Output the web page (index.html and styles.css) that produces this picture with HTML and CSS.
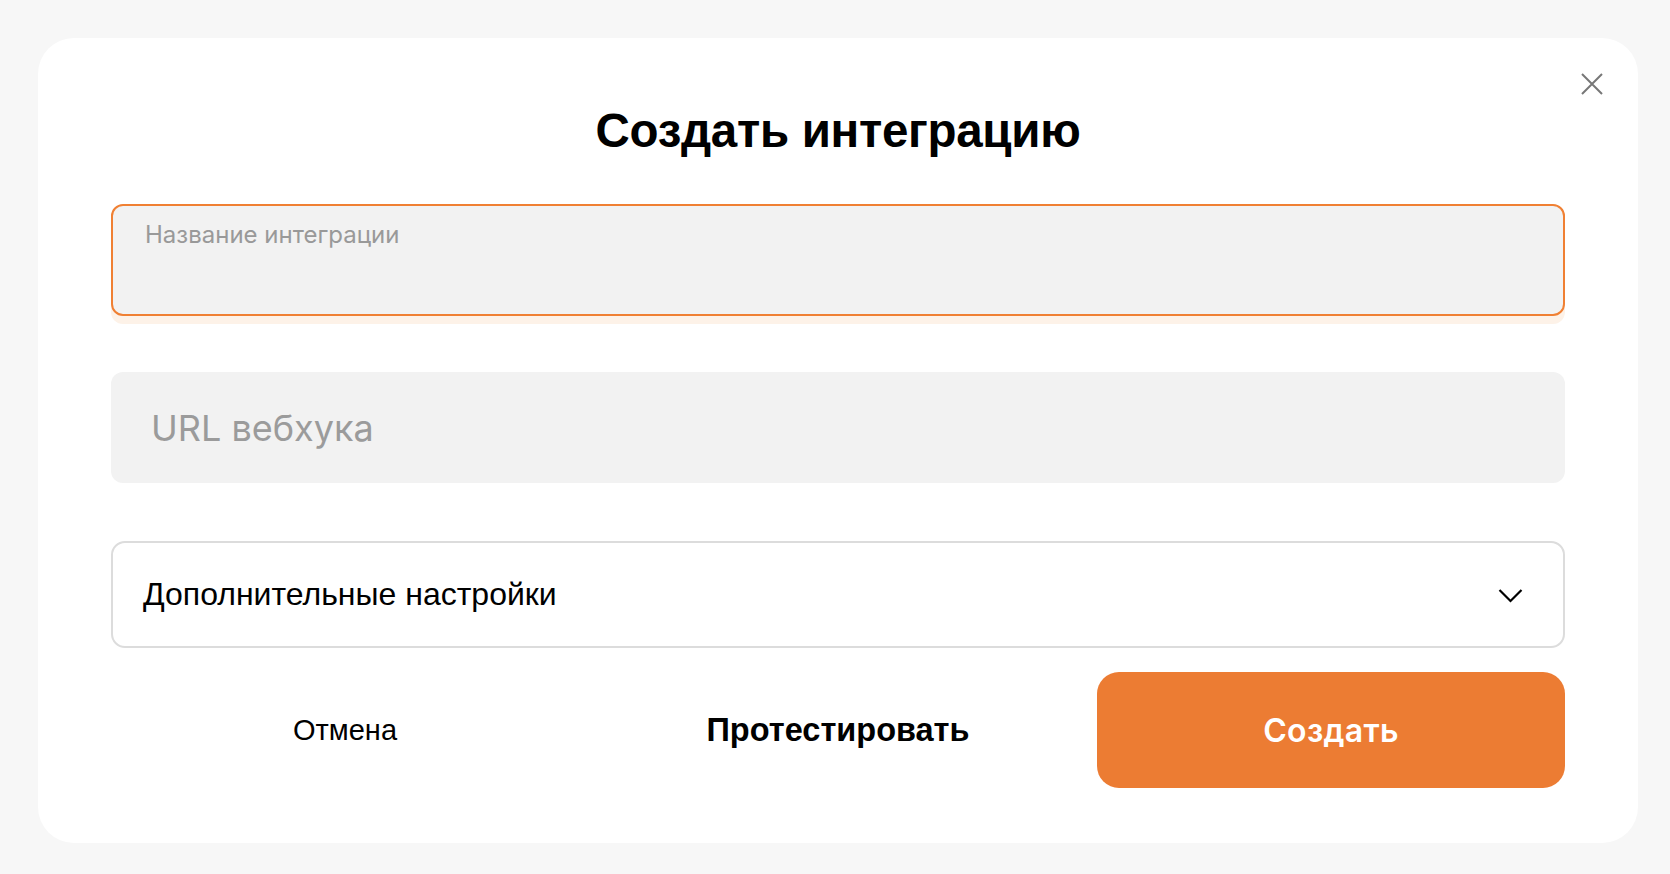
FILE: index.html
```html
<!DOCTYPE html>
<html lang="ru">
<head>
  <meta charset="UTF-8">
  <meta name="viewport" content="width=device-width, initial-scale=1.0">
  <title>Создать интеграцию</title>
  <link rel="stylesheet" href="styles.css">
</head>
<body>
  <div class="page">
    <div class="modal">
      <div class="close-btn">
        <svg width="22" height="22" viewBox="0 0 22 22">
          <path d="M1 1 L21 21 M21 1 L1 21" stroke="#777" stroke-width="2" fill="none"/>
        </svg>
      </div>

      <h1 class="modal-title">Создать интеграцию</h1>

      <div class="field field-focus">
        <span class="field-label">Название интеграции</span>
      </div>

      <div class="field field-url">
        <span class="placeholder">URL вебхука</span>
      </div>

      <div class="select">
        <span>Дополнительные настройки</span>
        <svg width="25" height="15" viewBox="0 0 25 15">
          <path d="M1.5 2 L12.5 13 L23.5 2" stroke="#000" stroke-width="2.2" fill="none"/>
        </svg>
      </div>

      <div class="actions">
        <a href="#" class="btn btn-cancel">Отмена</a>
        <a href="#" class="btn btn-test">Протестировать</a>
        <a href="#" class="btn btn-create">Создать</a>
      </div>
    </div>
  </div>
</body>
</html>
```

FILE: styles.css
```css
* {
  margin: 0;
  padding: 0;
  box-sizing: border-box;
}
html, body {
  height: 100%;
  background: #f7f7f7;
  font-family: 'Liberation Sans', Arial, sans-serif;
  color: #000;
  overflow: hidden;
}
.page {
  padding: 38px 32px 0 38px;
}
.modal {
  position: relative;
  background: #fff;
  border-radius: 36px;
  padding: 66px 73px 55px;
  display: flex;
  flex-direction: column;
}
.close-btn {
  position: absolute;
  top: 35px;
  right: 35px;
  width: 22px;
  height: 22px;
  cursor: pointer;
}
.close-btn svg {
  display: block;
}
.modal-title {
  text-align: center;
  font-size: 47.5px;
  font-weight: 700;
  line-height: 53px;
  letter-spacing: -0.3px;
  margin-bottom: 47px;
}
.field {
  background: #f2f2f2;
  border-radius: 12px;
}
.field-focus {
  height: 112px;
  border: 2px solid #f08033;
  box-shadow: 0 8px 0 #fdf2e8;
  padding: 14px 32px;
  margin-bottom: 56px;
}
.field-label {
  font-family: 'Inter', sans-serif;
  font-size: 24px;
  color: #999;
}
.field-url {
  height: 111px;
  display: flex;
  align-items: center;
  padding: 0 40px;
  margin-bottom: 58px;
}
.placeholder {
  font-family: 'Inter', sans-serif;
  font-size: 36px;
  color: #9b9b9b;
}
.select {
  height: 107px;
  border: 2px solid #dcdcdc;
  border-radius: 14px;
  display: flex;
  align-items: center;
  justify-content: space-between;
  padding: 0 40px 0 30px;
  font-size: 32px;
  margin-bottom: 24px;
  cursor: pointer;
}
.select svg {
  display: block;
  margin-top: 2px;
}
.actions {
  display: grid;
  grid-template-columns: 1fr 1fr 1fr;
  gap: 25px;
  height: 116px;
}
.btn {
  display: flex;
  align-items: center;
  justify-content: center;
  text-decoration: none;
  color: #000;
  border-radius: 22px;
}
.btn-cancel {
  font-size: 29px;
}
.btn-test {
  font-size: 32.5px;
  font-weight: 700;
}
.btn-create {
  background: #ec7c33;
  color: #fff;
  font-family: 'Inter', sans-serif;
  font-size: 32px;
  font-weight: 600;
  letter-spacing: 0.3px;
}
```
